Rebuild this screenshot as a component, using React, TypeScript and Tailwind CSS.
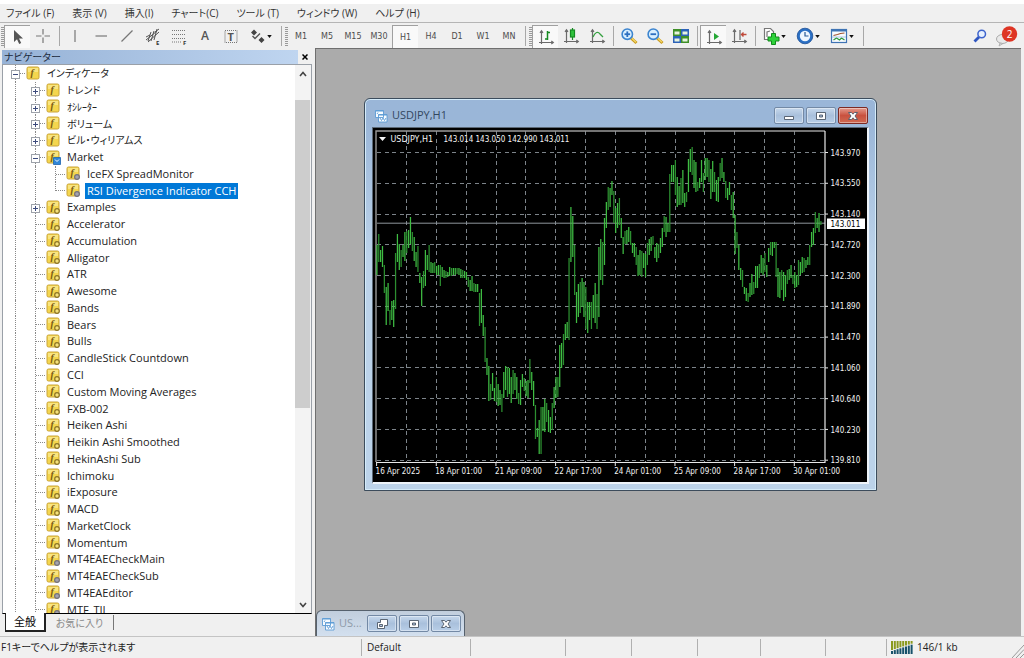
import React from "react";

const UI = "font-['Open_Sans','Noto_Sans_CJK_JP',sans-serif]";

const menus = ["ファイル (F)", "表示 (V)", "挿入(I)", "チャート(C)", "ツール (T)", "ウィンドウ (W)", "ヘルプ (H)"];
const frames = ["M1", "M5", "M15", "M30", "H1", "H4", "D1", "W1", "MN"];

type Kind = "folder" | "market" | "paid" | "custom";
type Node = { label: string; depth: number; kind: Kind; box?: "+" | "-"; last?: boolean; selected?: boolean; kana?: boolean };

const nodes: Node[] = [
  { label: "インディケータ", depth: 0, kind: "folder", box: "-", kana: true },
  { label: "トレンド", depth: 1, kind: "folder", box: "+", kana: true },
  { label: "ｵｼﾚｰﾀｰ", depth: 1, kind: "folder", box: "+", kana: true },
  { label: "ボリューム", depth: 1, kind: "folder", box: "+", kana: true },
  { label: "ビル・ウィリアムス", depth: 1, kind: "folder", box: "+", kana: true },
  { label: "Market", depth: 1, kind: "market", box: "-" },
  { label: "IceFX SpreadMonitor", depth: 2, kind: "paid" },
  { label: "RSI Divergence Indicator CCH", depth: 2, kind: "paid", last: true, selected: true },
  { label: "Examples", depth: 1, kind: "custom", box: "+" },
  ...[
    "Accelerator", "Accumulation", "Alligator", "ATR", "Awesome", "Bands", "Bears", "Bulls",
    "CandleStick Countdown", "CCI", "Custom Moving Averages", "FXB-002", "Heiken Ashi",
    "Heikin Ashi Smoothed", "HekinAshi Sub", "Ichimoku", "iExposure", "MACD", "MarketClock", "Momentum",
  ].map((label): Node => ({ label, depth: 1, kind: "custom" })),
  ...["MT4EAECheckMain", "MT4EAECheckSub", "MT4EAEditor", "MTF_TII"].map((label): Node => ({ label, depth: 1, kind: "paid" })),
];

/* High and low of each hourly bar, as vertical positions on the chart. */
const bars: [number, number][] = [
  [245, 275], [234, 262], [250, 262], [246, 267], [265, 293], [287, 325], [283, 311], [310, 325], [301, 320], [300, 327],
  [253, 309], [234, 262], [244, 270], [250, 267], [245, 257], [232, 261], [231, 253], [230, 248], [217, 244], [232, 251],
  [237, 261], [252, 267], [246, 272], [273, 283], [277, 306], [271, 288], [250, 286], [255, 270], [245, 272], [262, 273],
  [263, 273], [262, 273], [266, 275], [265, 275], [265, 286], [267, 277], [270, 278], [271, 278], [272, 277], [267, 276],
  [268, 276], [268, 275], [268, 275], [268, 274], [268, 275], [269, 278], [270, 278], [271, 278], [272, 280], [277, 287],
  [280, 291], [276, 291], [283, 292], [284, 292], [284, 292], [293, 326], [289, 323], [315, 336], [327, 362], [358, 375],
  [366, 401], [384, 400], [373, 391], [388, 401], [377, 402], [384, 406], [390, 405], [394, 412], [372, 398], [366, 390],
  [367, 397], [368, 394], [377, 403], [370, 394], [373, 390], [377, 399], [393, 404], [380, 405], [374, 387], [378, 391],
  [381, 396], [380, 398], [359, 383], [372, 390], [381, 406], [405, 439], [428, 437], [420, 454], [407, 454], [407, 431],
  [399, 432], [403, 422], [410, 432], [417, 433], [403, 430], [387, 408], [377, 398], [377, 397], [345, 387], [343, 368],
  [334, 365], [324, 340], [322, 338], [258, 340], [207, 262], [216, 257], [245, 295], [292, 323], [284, 317], [282, 313],
  [278, 307], [282, 317], [287, 329], [302, 333], [302, 320], [302, 329], [295, 318], [283, 323], [294, 329], [247, 317],
  [239, 280], [242, 285], [218, 265], [202, 228], [187, 210], [188, 207], [181, 195], [191, 223], [208, 233], [203, 228],
  [198, 225], [218, 238], [237, 254], [231, 244], [230, 244], [227, 242], [231, 245], [243, 253], [243, 257], [247, 265],
  [255, 276], [250, 275], [251, 277], [253, 268], [254, 277], [243, 265], [239, 255], [237, 251], [236, 245], [247, 258],
  [243, 262], [244, 258], [238, 253], [228, 247], [216, 232], [217, 237], [223, 232], [174, 232], [165, 182], [165, 182],
  [160, 195], [177, 207], [186, 205], [178, 205], [170, 203], [193, 207], [192, 202], [159, 192], [149, 172], [147, 175],
  [160, 188], [162, 192], [182, 191], [178, 188], [160, 182], [173, 192], [158, 180], [158, 177], [160, 182], [169, 199],
  [161, 192], [172, 192], [180, 201], [177, 202], [163, 181], [158, 178], [172, 182], [181, 198], [188, 200], [182, 195],
  [195, 210], [192, 218], [215, 254], [232, 248], [245, 270], [268, 280], [270, 287], [287, 294], [288, 301], [293, 302],
  [283, 297], [274, 295], [282, 294], [266, 288], [266, 288], [264, 278], [255, 273], [258, 275], [253, 272], [265, 277],
  [248, 262], [242, 255], [242, 256], [242, 248], [242, 277], [268, 297], [272, 298], [270, 290], [272, 301], [275, 297],
  [270, 284], [269, 280], [265, 278], [275, 284], [272, 288], [275, 287], [260, 285], [262, 275], [257, 273], [258, 272],
  [260, 268], [257, 265], [245, 265], [232, 247], [228, 245], [212, 233], [218, 228], [213, 232], [221, 225],
];

const prices = ["143.970", "143.550", "143.140", "142.720", "142.300", "141.890", "141.470", "141.060", "140.640", "140.230", "139.810"];
const dates = ["16 Apr 2025", "18 Apr 01:00", "21 Apr 09:00", "22 Apr 17:00", "24 Apr 01:00", "25 Apr 09:00", "28 Apr 17:00", "30 Apr 01:00"];

function Chart() {
  const step = (820.7 - 376.7) / (bars.length - 1);
  return (
    <svg viewBox="373 128 494 354" className="block w-full bg-black font-['DejaVu_Sans_Condensed','DejaVu_Sans',sans-serif] text-[8px]" role="img" aria-label="USDJPY,H1">
      <g stroke="#7d848a" strokeWidth="1" strokeDasharray="4 3.5" shapeRendering="crispEdges">
        {prices.map((p, i) => (
          <line key={p} x1="377" x2="825" y1={152.5 + i * 30.77} y2={152.5 + i * 30.77} />
        ))}
        {Array.from({ length: 14 }, (_, i) => (
          <line key={i} y1="131" y2="462" x1={406.6 + i * 29.83} x2={406.6 + i * 29.83} />
        ))}
      </g>
      <path d="M376 462V131H825" fill="none" stroke="#9a9a9a" strokeWidth="1.4" />
      <path d="M377 223.2H825" stroke="#8f959b" strokeWidth="1" />
      {bars.map(([a, b], i) => (
        <line key={i} x1={376.9 + i * step} x2={376.9 + i * step} y1={a} y2={b} stroke={i % 3 === 1 ? "#2c8f30" : "#3fbd43"} strokeWidth="1.25" />
      ))}
      <path d="M825 131V462.5H376" fill="none" stroke="#e8e8e8" strokeWidth="1.2" />
      <g fill="#f4f4f4">
        {prices.map((p, i) => (
          <React.Fragment key={p}>
            <path d={`M825 ${152.5 + i * 30.77}h3`} stroke="#e8e8e8" />
            <text x="830.5" y={155.6 + i * 30.77}>{p}</text>
          </React.Fragment>
        ))}
        {dates.map((d, i) => (
          <React.Fragment key={d}>
            <path d={`M${376.6 + i * 59.67} 462v4`} stroke="#e8e8e8" />
            <text x={375.6 + i * 59.67} y="474">{d}</text>
          </React.Fragment>
        ))}
        <path d="M379 137h7l-3.5 4z" />
        <text x="390.5" y="141.5" className="font-['DejaVu_Sans',sans-serif]">USDJPY,H1</text>
        <text x="443.5" y="141.5">143.014 143.050 142.990 143.011</text>
      </g>
      <path d="M827 218.5h38v10.5h-38z" fill="#fff" />
      <text x="830.5" y="226.8" fill="#000">143.011</text>
    </svg>
  );
}

function FnIcon({ kind }: { kind: Kind }) {
  return (
    <svg viewBox="0 0 15 15" className="size-[15px] shrink-0" aria-hidden="true">
      <rect x="1" y="1" width="12" height="12" rx="1.5" fill="#f4d64e" stroke="#c9a338" />
      <path d="M2 2h10v4H2z" fill="#fbeb96" opacity=".7" />
      <text x="4.6" y="10.2" fontSize="10" fontStyle="italic" fontWeight="bold" fill="#7c5a10" fontFamily="Liberation Serif, serif">f</text>
      {kind === "custom" && <circle cx="11" cy="11" r="2.3" fill="#f6e27a" stroke="#8c7426" strokeWidth="1.2" />}
      {kind === "paid" && <circle cx="11" cy="11" r="2.4" fill="#a5a3ae" stroke="#74727c" strokeWidth="1.2" />}
      {kind === "market" && (
        <>
          <path d="M7.5 7.5h7v7h-7z" fill="#2f86d8" stroke="#1c62ad" strokeWidth=".8" />
          <path d="M9 9.5l2 2 2-2" stroke="#fff" fill="none" />
        </>
      )}
    </svg>
  );
}

function Branch({ box, joined, last }: { box?: "+" | "-"; joined?: boolean; last?: boolean }) {
  return (
    <span className="relative flex h-full w-5 shrink-0" aria-hidden="true">
      <span className={`w-[11px] border-r border-dotted border-[#8a8a8a] ${last ? "h-1/2" : "h-full"}`} />
      {joined && <span className="h-[9px] flex-1 border-b border-dotted border-[#8a8a8a]" />}
      {box && (
        <span className="absolute top-[5px] left-[6px] flex size-[9px] items-center justify-center border border-[#9da2aa] bg-white">
          <span className="absolute h-px w-[5px] bg-[#3c4a7c]" />
          {box === "+" && <span className="absolute h-[5px] w-px bg-[#3c4a7c]" />}
        </span>
      )}
    </span>
  );
}

function TreeRow({ node }: { node: Node }) {
  return (
    <li className="flex min-h-0 items-center">
      {Array.from({ length: node.depth }, (_, i) => (
        <Branch key={i} />
      ))}
      <Branch joined box={node.box} last={node.last} />
      <span className="flex w-[20px] shrink-0 pl-px">
        <FnIcon kind={node.kind} />
      </span>
      <button
        className={`h-4 px-0.5 leading-4 whitespace-nowrap ${node.selected ? "bg-[#0078d7] text-white" : "text-[#222]"} ${node.kana ? "text-[10px]" : ""}`}
      >
        {node.label}
      </button>
    </li>
  );
}

function Handle() {
  return <span className="ml-px h-[19px] w-[3px] shrink-0 bg-[repeating-linear-gradient(#9a9a9a_0_1px,#f0f0f0_1px_2px)]" />;
}

function Sep() {
  return (
    <span className="flex w-[6px] shrink-0 justify-center">
      <span className="h-[20px] w-px bg-[#a8a8a8]" />
    </span>
  );
}

function Tool({ label, pressed, drop, children }: { label: string; pressed?: boolean; drop?: boolean; children: React.ReactNode }) {
  return (
    <button
      aria-label={label}
      className={`flex h-[23px] shrink-0 items-center ${drop ? "w-[34px] gap-px pl-1" : "w-[26px] justify-center"} ${pressed ? "border-t border-l border-[#a0a0a0] bg-[#f9f9f9]" : ""}`}
    >
      {children}
      {drop && (
        <svg viewBox="0 0 6 4" className="h-[3px] w-[5px]" aria-hidden="true">
          <path d="M0 0h6L3 4z" fill="#111" />
        </svg>
      )}
    </button>
  );
}

function Ico({ children }: { children: React.ReactNode }) {
  return (
    <svg viewBox="0 0 18 18" className="size-[18px] shrink-0" fill="none" stroke="#666" strokeWidth="1.2" aria-hidden="true">
      {children}
    </svg>
  );
}

function Axes() {
  return <path d="M4.5 3v13M2 14.5h14M3 4.8l1.5-2 1.5 2M14.3 13l2 1.5-2 1.5" stroke="#6a6a6a" strokeWidth="1.2" />;
}

function Lens({ plus }: { plus?: boolean }) {
  return (
    <Ico>
      <path d="M11 11l5.5 5" stroke="#c99a1c" strokeWidth="3" />
      <path d="M11.5 11l4.5 4.2" stroke="#f5d96a" strokeWidth="1.2" />
      <circle cx="7.3" cy="7.2" r="5.2" fill="#d9efff" stroke="#3b84cf" strokeWidth="1.6" />
      <path d="M4.5 7.2h5.6" stroke="#2c6fc0" strokeWidth="1.8" />
      {plus && <path d="M7.3 4.4V10" stroke="#2c6fc0" strokeWidth="1.8" />}
    </Ico>
  );
}

function Toolbar() {
  return (
    <div role="toolbar" aria-label="ツールバー" className="flex h-[26px] shrink-0 items-center overflow-hidden border-t border-[#b5b5b5] bg-[#f0f0f0] pt-px">
      <Handle />
      <Tool label="カーソル" pressed>
        <Ico><path d="M5 2v12l3-2.8 2.2 4.8 2-1-2.2-4.6h4z" fill="#555" stroke="none" /></Ico>
      </Tool>
      <Tool label="クロスヘア">
        <Ico><path d="M9 2v5.5M9 10.5V16M2 9h5.5M10.5 9H16" stroke="#777" /></Ico>
      </Tool>
      <Sep />
      <Tool label="垂直線"><Ico><path d="M9 3v12" stroke="#777" /></Ico></Tool>
      <Tool label="水平線"><Ico><path d="M3.5 9h11.5" stroke="#777" /></Ico></Tool>
      <Tool label="トレンドライン"><Ico><path d="M3.5 14.5l11-11" stroke="#777" /></Ico></Tool>
      <Tool label="チャネル">
        <Ico>
          <path d="M2 13L13 4M4 15L15 5M4 14l3-9M7 14l3-10M10 13l3-11M2 10l4-2M11 5l4-3" stroke="#555" strokeWidth="1" />
          <text x="12" y="17.5" fontSize="6" fontWeight="bold" fill="#333" stroke="none">E</text>
        </Ico>
      </Tool>
      <Tool label="フィボナッチ">
        <Ico>
          <path d="M2 3.5h14M2 7.5h14M2 11.5h14M2 15h9" strokeDasharray="1 1" stroke="#777" />
          <text x="13" y="17.5" fontSize="6" fontWeight="bold" fill="#333" stroke="none">F</text>
        </Ico>
      </Tool>
      <Tool label="テキスト"><span className="text-[12px] font-semibold text-[#555]">A</span></Tool>
      <Tool label="ラベル">
        <Ico>
          <rect x="3" y="3.5" width="12" height="12" strokeDasharray="1 1" stroke="#777" />
          <text x="5.5" y="13.5" fontSize="11" fontWeight="bold" fill="#555" stroke="none">T</text>
        </Ico>
      </Tool>
      <Tool label="矢印" drop>
        <Ico>
          <path d="M3 5.5l3-3 3 3-3 3zM10.5 13l3-3 3 3-3 3z" fill="#444" stroke="none" />
          <path d="M4.5 9l2.5 2.5 5-5" stroke="#555" strokeWidth="1.4" />
        </Ico>
      </Tool>
      <Sep />
      <Handle />
      {frames.map((f) => (
        <Tool key={f} label={f} pressed={f === "H1"}>
          <span className="pt-0.5 font-['DejaVu_Sans',sans-serif] text-[8px] text-[#4d4d4d]">{f}</span>
        </Tool>
      ))}
      <Sep />
      <Handle />
      <Tool label="バーチャート" pressed>
        <Ico><Axes /><path d="M10.5 3v9M8 11h2.5M10.5 4.5H13" stroke="#168a22" strokeWidth="1.5" /></Ico>
      </Tool>
      <Tool label="ローソク足">
        <Ico><Axes /><path d="M10.5 1v12" stroke="#168a22" /><rect x="8.5" y="3" width="4" height="7" fill="#2fc23c" stroke="#168a22" /></Ico>
      </Tool>
      <Tool label="ラインチャート">
        <Ico><Axes /><path d="M5 10c2-5 5-6 7-3l3 3" stroke="#35a040" strokeWidth="1.3" /></Ico>
      </Tool>
      <Sep />
      <Tool label="ズームイン"><Lens plus /></Tool>
      <Tool label="ズームアウト"><Lens /></Tool>
      <Tool label="ウィンドウの整列">
        <Ico>
          <path d="M1 2h8v7H1zM9 9h8v7H9z" fill="#3f8f28" stroke="none" />
          <path d="M9 2h8v7H9zM1 9h8v7H1z" fill="#2c62b8" stroke="none" />
          <path d="M2.5 4.5h5v3h-5zM10.5 4.5h5v3h-5zM2.5 11.5h5v3h-5zM10.5 11.5h5v3h-5z" fill="#e8f3df" stroke="none" />
        </Ico>
      </Tool>
      <Sep />
      <Tool label="オートスクロール" pressed>
        <Ico><Axes /><path d="M9 5v7l5-3.5z" fill="#25a735" stroke="none" /></Ico>
      </Tool>
      <Tool label="チャートシフト">
        <Ico><Axes /><path d="M10 3v10" /><path d="M16.5 7.5h-5M13.5 5.5l-2 2 2 2" stroke="#c04a3a" strokeWidth="1.4" /></Ico>
      </Tool>
      <Sep />
      <Tool label="インディケータ追加" drop>
        <Ico>
          <path d="M2.5 1.5h6l3 3v8h-9z" fill="#fff" stroke="#777" />
          <path d="M5 10V5l3-1" stroke="#777" />
          <path d="M9.5 6.5h4v3.5H17v4h-3.5v3.5h-4V14H6v-4h3.5z" fill="#2ed13a" stroke="#128a1c" strokeWidth="1" />
        </Ico>
      </Tool>
      <Tool label="時間軸" drop>
        <Ico>
          <circle cx="9" cy="9" r="7.8" fill="#2a6fc4" stroke="#1d4f96" strokeWidth=".8" />
          <circle cx="9" cy="9" r="5.2" fill="#eef6ff" stroke="none" />
          <path d="M9 5v4h3.5" stroke="#2a5a96" />
        </Ico>
      </Tool>
      <Tool label="テンプレート" drop>
        <Ico>
          <rect x="1.5" y="2.5" width="15" height="13" fill="#f7fbff" stroke="#3f74b4" />
          <path d="M1.5 3.5h15" stroke="#3f74b4" strokeWidth="2" />
          <path d="M3.5 8.5l4-1 3-1 4-.5" stroke="#a0522d" />
          <path d="M3.5 13l3-2 3 2 2-2 3 2" stroke="#2c9a3a" />
          <path d="M2 10h14" stroke="#9cb8d8" strokeWidth=".8" />
        </Ico>
      </Tool>
      <Sep />
      <span className="flex-1" />
      <Tool label="検索">
        <Ico>
          <path d="M8 10L3.5 14.5" stroke="#2f56c0" strokeWidth="2.8" />
          <circle cx="10.7" cy="7" r="3.8" fill="#e6f0ff" stroke="#3d63cc" strokeWidth="1.5" />
        </Ico>
      </Tool>
      <button aria-label="通知" className="mr-[6px] ml-[2px] flex w-[23px] shrink-0">
        <svg viewBox="0 0 23 22" className="h-[22px] w-[23px]" aria-hidden="true">
          <ellipse cx="7.5" cy="14" rx="6" ry="4.5" fill="#e9e9e9" stroke="#aaa" />
          <path d="M5 18l-1 3 4-2.5z" fill="#ddd" stroke="#aaa" strokeWidth=".8" />
          <circle cx="14.5" cy="9" r="7.7" fill="#de3524" />
          <text x="14.5" y="12.6" textAnchor="middle" fontSize="10" fill="#fff">2</text>
        </svg>
      </button>
    </div>
  );
}

function Navigator() {
  return (
    <aside className="flex w-[315px] shrink-0 flex-col bg-[#f0f0f0] pt-[2px] pl-[2px]">
      <header className="flex h-[14px] shrink-0 items-center">
        <h2 className="flex h-full w-[296px] items-center bg-linear-to-r from-[#96b2d6] to-[#bfd5f0] pl-0.5 text-[10px] text-[#1b2a3c]">ナビゲーター</h2>
        <button aria-label="閉じる" className="flex w-[14px] justify-center">
          <svg viewBox="0 0 6 6" className="size-[6px]" aria-hidden="true"><path d="M.5.5l5 5M5.5.5l-5 5" stroke="#000" strokeWidth="1.5" /></svg>
        </button>
      </header>
      <div className="mr-[3px] flex min-h-0 flex-1 border border-[#9aa0a8] border-b-black bg-white">
        <div className="min-h-0 flex-1 overflow-hidden pl-0.5">
          <ul className="grid h-[553px] auto-rows-fr">
            {nodes.map((n) => <TreeRow key={n.label} node={n} />)}
          </ul>
        </div>
        <div className="flex w-[16px] shrink-0 flex-col bg-[#f3f3f3] pr-px">
          <button aria-label="上へ" className="flex h-[35px] justify-center pt-[6px]">
            <svg viewBox="0 0 8 6" className="h-[6px] w-[8px]" aria-hidden="true"><path d="M1 5l3-3.5L7 5" fill="none" stroke="#444" strokeWidth="1.6" /></svg>
          </button>
          <div className="h-[308px] bg-[#cdcdcd]" />
          <button aria-label="下へ" className="mt-auto flex justify-center pb-[5px]">
            <svg viewBox="0 0 8 6" className="h-[6px] w-[8px]" aria-hidden="true"><path d="M1 1l3 3.5L7 1" fill="none" stroke="#444" strokeWidth="1.6" /></svg>
          </button>
        </div>
      </div>
      <div role="tablist" className="flex h-[22px] shrink-0 items-start pl-[3px]">
        <button role="tab" aria-selected="true" className="-mt-px h-[19px] w-[41px] border-r-2 border-b-2 border-l border-[#222] bg-white text-[11px] leading-4 text-black">全般</button>
        <button role="tab" aria-selected="false" className="mt-px h-[15px] w-[68px] border-r border-[#777] text-[10px] leading-4 text-[#8a8a8a]">お気に入り</button>
      </div>
    </aside>
  );
}

function ChartIcon() {
  return (
    <svg viewBox="0 0 14 14" className="size-[14px] shrink-0" fill="#f7fbff" stroke="#5b9bd5" strokeWidth=".9" aria-hidden="true">
      <path d="M1.5 1.5h8v7h-8zM4.5 5.5h8.5v7.5H4.5z" />
      <path d="M1.5 2h8M4.5 6h8.5" strokeWidth="1" />
      <path d="M3 5l1-1.5M6 9l1.5 2.5L9 9l1.5 2.5L12 9" fill="none" strokeWidth=".9" />
    </svg>
  );
}

type Glyph = "min" | "max" | "close" | "restore";

function WinButton({ glyph, label, red }: { glyph: Glyph; label: string; red?: boolean }) {
  return (
    <button
      aria-label={label}
      className={`flex h-[17px] w-[30px] items-center justify-center rounded-[2px] border inset-shadow-[0_0_0_1px_#ffffff66] ${
        red ? "border-[#7c2a24] bg-linear-to-b from-[#e39a8d] via-[#c9513f] to-[#cf6a52]" : "border-[#7389a5] bg-linear-to-b from-[#c6d8ec] via-[#a9c0dc] to-[#b9cfe8]"
      }`}
    >
      <svg viewBox="0 0 12 10" className="h-[10px] w-[12px]" fill="#fff" stroke="#4d5866" strokeWidth=".9" aria-hidden="true">
        {glyph === "min" && <path d="M1.5 5.5h9v3h-9z" />}
        {glyph === "max" && <path fillRule="evenodd" d="M1.5 1.5h9v7h-9zM4.5 4h3v2h-3z" />}
        {glyph === "restore" && <path fillRule="evenodd" d="M4.5.5h7v6h-3v3h-7v-6h3zM3.5 5.5h3v2h-3z" />}
        {glyph === "close" && <path d="M1.5 1.5h3L6 3.2l1.5-1.7h3L8 5l2.5 3.5h-3L6 6.8 4.5 8.5h-3L4 5z" />}
      </svg>
    </button>
  );
}

function ChartWindow() {
  return (
    <section className="absolute top-[49px] left-[48px] w-[513px] rounded-t-[6px] border border-[#3c4c5c] bg-linear-to-b from-[#9ab6d8] from-5% to-[#bcd3ea] to-40% px-[7px] pb-[6px] inset-shadow-[0_0_0_1px_#d5ecfa]">
      <header className="flex h-[28px] items-center gap-[4px] pt-[5px] pl-[2px]">
        <ChartIcon />
        <h1 className="flex-1 text-[11px] text-[#33475f]">USDJPY,H1</h1>
        <div className="flex gap-[2px] pr-px">
          <WinButton glyph="min" label="最小化" />
          <WinButton glyph="max" label="最大化" />
          <WinButton glyph="close" label="閉じる" red />
        </div>
      </header>
      <div className="border-t border-r-2 border-b-2 border-l border-t-[#5b6876] border-r-[#eef4fa] border-b-[#eef4fa] border-l-[#5b6876]">
        <Chart />
      </div>
    </section>
  );
}

function MinimizedWindow() {
  return (
    <section className="absolute bottom-0 left-0 flex h-[26px] w-[149px] items-center rounded-t-[6px] border border-b-0 border-[#56616d] bg-linear-to-b from-[#c1cedd] to-[#d3e0ef] pl-[4px]">
      <ChartIcon />
      <h2 className="w-[32px] pl-[4px] text-[11px] text-[#8e9aa8]">US...</h2>
      <div className="flex gap-[2px]">
        <WinButton glyph="restore" label="元に戻す" />
        <WinButton glyph="max" label="最大化" />
        <WinButton glyph="close" label="閉じる" />
      </div>
    </section>
  );
}

function StatusBar() {
  return (
    <footer className="flex h-[22px] shrink-0 items-center border-t border-[#c4c4c4] bg-[#f0f0f0] text-[10px] text-[#222]">
      <span className="w-[361px] shrink-0 pl-px">F1キーでヘルプが表示されます</span>
      <span className="h-[17px] w-[109px] shrink-0 border-l border-[#b0b0b0] pl-[5px] leading-4">Default</span>
      <span className="h-[17px] w-[95px] border-l border-[#b0b0b0]" />
      <span className="h-[17px] w-[66px] border-l border-[#b0b0b0]" />
      <span className="h-[17px] w-[66px] border-l border-[#b0b0b0]" />
      <span className="h-[17px] w-[63px] border-l border-[#b0b0b0]" />
      <span className="h-[17px] w-[65px] border-l border-[#b0b0b0]" />
      <span className="h-[17px] w-[61px] border-l border-[#b0b0b0]" />
      <span className="flex h-[17px] flex-1 items-center gap-[4px] border-l border-[#b0b0b0] pl-[4px]">
        <svg viewBox="0 0 22 13" className="h-[13px] w-[22px]" aria-hidden="true">
          {Array.from({ length: 8 }, (_, i) => (
            <React.Fragment key={i}>
              <rect x={i * 2.8} y="0" width="2" height={9 - i * 0.9} fill="#8a9a1e" />
              <rect x={i * 2.8} y={10 - i * 0.9} width="2" height={3 + i * 0.9} fill="#17516a" />
            </React.Fragment>
          ))}
        </svg>
        146/1 kb
      </span>
      <svg viewBox="0 0 12 14" className="h-[14px] w-[12px] self-end" aria-hidden="true">
        <path d="M0 14L12 1M4 14l8-8.5M8 14l4-4" stroke="#999" fill="none" />
      </svg>
    </footer>
  );
}

export default function App() {
  return (
    <div className={`${UI} flex h-screen flex-col overflow-hidden bg-[#f0f0f0] text-[11px] [font-feature-settings:'palt']`}>
      <nav className="flex h-[22px] shrink-0 items-center gap-[18px] border-t-4 border-white pl-[6px] text-[10px] text-[#333]">
        {menus.map((m) => (
          <button key={m} className="leading-4 whitespace-nowrap">{m}</button>
        ))}
      </nav>
      <Toolbar />
      <div className="flex min-h-0 flex-1">
        <Navigator />
        <main className="relative mr-[3px] min-w-0 flex-1 overflow-hidden border-t border-l border-[#6f6f6f] bg-[#ababab]">
          <ChartWindow />
          <MinimizedWindow />
        </main>
      </div>
      <StatusBar />
    </div>
  );
}
